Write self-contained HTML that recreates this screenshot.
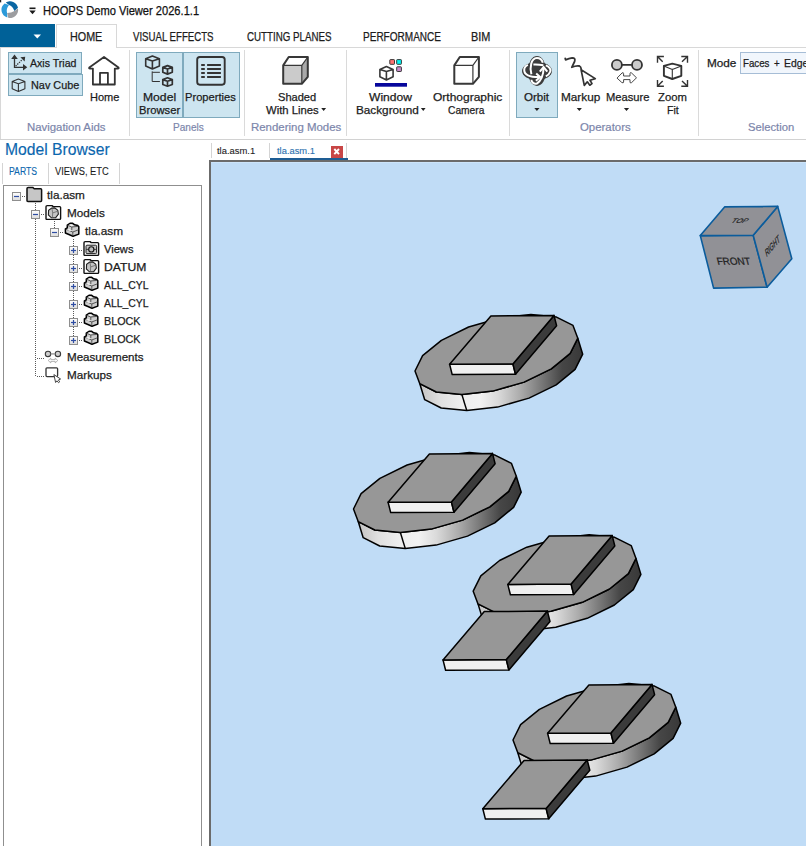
<!DOCTYPE html>
<html><head><meta charset="utf-8">
<style>
*{margin:0;padding:0;box-sizing:border-box}
html,body{width:806px;height:846px;overflow:hidden;background:#fff;font-family:"Liberation Sans",sans-serif;color:#1a1a1a}
.a{position:absolute}
.f{position:absolute;white-space:nowrap;font-size:11.5px;line-height:12px;color:#1c1c1c;transform-origin:0 0;-webkit-text-stroke:0.25px currentColor}
.big{font-size:12px}
.g{color:#7c86ab;font-size:11px;-webkit-text-stroke:0.2px currentColor}
.sep{position:absolute;width:1px;background:#dadada;top:50px;height:86px}
.hl{position:absolute;background:#cde5f0;border:1px solid #7faabd}
svg{overflow:visible}
</style></head><body>

<!-- ===== title bar ===== -->
<svg class="a" style="left:0;top:0" width="24" height="22">
  <path d="M0 0 L1.2 0 L1.2 2.6 L0 2.2 Z" fill="#222"></path>
  <path d="M4.6 3.4 A8 8 0 0 0 7.4 17.5 L7.1 13.1 Q5.8 8.6 9 4.9 Z" fill="#2b9ad9"></path>
  <path d="M5.8 2.6 A8 8 0 0 1 18.0 7.7 L14.4 10.9 Q12.6 5.9 9 4.9 Z" fill="#0a66a3"></path>
  <path d="M18.0 8.6 A8 8 0 0 1 8.2 17.8 L7.1 13.1 Q11.5 12.6 14.4 10.9 Z" fill="#9c9da0"></path>
</svg>
<svg class="a" style="left:0;top:0" width="45" height="22">
  <rect x="29.5" y="7.5" width="6" height="1.6" fill="#1a1a1a"></rect>
  <path d="M29.3 10.6 L35.7 10.6 L32.5 14.2 Z" fill="#1a1a1a"></path>
</svg>
<div class="f big" style="--x0: 43; --x1: 199.4; --by: 14.9; color: rgb(17, 17, 17); left: 43px; top: 4.9px; transform: scaleX(0.9262);">HOOPS Demo Viewer 2026.1.1</div>

<!-- ===== tabs row ===== -->
<div class="a" style="left:0;top:24px;width:55px;height:23px;background:#006198"></div>
<svg class="a" style="left:0;top:0" width="60" height="50"><path d="M33.5 34.5 L41 34.5 L37.25 38.5 Z" fill="#fff"></path></svg>
<div class="a" style="left:0;top:47px;width:806px;height:1px;background:#d8d8d8"></div>
<div class="a" style="left:56px;top:24px;width:61px;height:24px;background:#fff;border:1px solid #d8d8d8;border-bottom:none"></div>
<div class="f big" style="--x0: 70.3; --x1: 102.6; --by: 41; left: 70.3px; top: 31px; transform: scaleX(0.8973);">HOME</div>
<div class="f big" style="--x0: 132.9; --x1: 213.8; --by: 41; left: 132.9px; top: 31px; transform: scaleX(0.8035);">VISUAL EFFECTS</div>
<div class="f big" style="--x0: 246.5; --x1: 331; --by: 41; left: 246.5px; top: 31px; transform: scaleX(0.8124);">CUTTING PLANES</div>
<div class="f big" style="--x0: 362.6; --x1: 440.6; --by: 41; left: 362.6px; top: 31px; transform: scaleX(0.8357);">PERFORMANCE</div>
<div class="f big" style="--x0: 470.6; --x1: 490; --by: 41; left: 470.6px; top: 31px; transform: scaleX(0.9092);">BIM</div>

<!-- ===== ribbon body ===== -->
<div class="a" style="left:0;top:139px;width:806px;height:1px;background:#d2d2d2"></div>
<div class="a" style="left:0;top:47px;width:1px;height:92px;background:#d8d8d8"></div>
<div class="sep" style="left:129px"></div>
<div class="sep" style="left:244px"></div>
<div class="sep" style="left:346px"></div>
<div class="sep" style="left:509px"></div>
<div class="sep" style="left:698px"></div>

<!-- nav aids -->
<div class="hl" style="left:8px;top:52px;width:74px;height:22px"></div>
<div class="hl" style="left:8px;top:74px;width:75px;height:22px"></div>
<svg class="a" style="left:0;top:0" width="130" height="100" fill="none" stroke="#333" stroke-width="1.3">
  <path d="M14.5 58 L14.5 67.3 L23.5 67.3"></path>
  <path d="M14.5 54.6 L11.2 59 L17.8 59 Z M27.3 67.3 L23 64 L23 70.6 Z M25.2 56.7 L20.4 57.3 L24.6 61.6 Z" fill="#333" stroke="none"></path>
  <path d="M15.6 66.2 L22.4 59.4" stroke-width="1.2" stroke-dasharray="1.4 1"></path>
  <path d="M12.2 81.4 L18.4 79 L24.9 81.4 L24.9 88.7 L18.4 91.5 L12.2 88.7 Z M12.2 81.4 L18.4 83.7 L24.9 81.4 M18.4 83.7 L18.4 91.5" stroke-width="1.1" stroke-linejoin="round"></path>
  <path d="M104 57 L89.3 67.5 Q88.6 68.6 90 68.6 L92.9 68.6 L92.9 84.5 L114.8 84.5 L114.8 68.6 L117.8 68.6 Q119.2 68.6 118.5 67.5 Z M100 84.5 L100 72.8 L107.9 72.8 L107.9 84.5" stroke-width="1.8" stroke-linejoin="round"></path>
</svg>
<div class="f" style="--x0: 29.8; --x1: 76.1; --by: 67; left: 29.8px; top: 57px; transform: scaleX(0.9205);">Axis Triad</div>
<div class="f" style="--x0: 30.6; --x1: 78.5; --by: 88.6; left: 30.6px; top: 78.6px; transform: scaleX(0.944);">Nav Cube</div>
<div class="f" style="--x0: 89.5; --x1: 118.5; --by: 101.2; left: 89.5px; top: 91.2px; transform: scaleX(0.9577);">Home</div>
<div class="f g" style="--x0: 26.8; --x1: 106.4; --by: 130.5; left: 26.8px; top: 120.5px; transform: scaleX(1.0347);">Navigation Aids</div>

<!-- panels -->
<div class="hl" style="left:136px;top:52px;width:47px;height:66px"></div>
<div class="hl" style="left:183px;top:52px;width:57px;height:66px"></div>
<svg class="a" style="left:0;top:0" width="250" height="100" fill="none" stroke="#333" stroke-linejoin="round">
  <path d="M152.4 56 L145.7 58.7 L145.7 66.1 L152.4 68.9 L159.4 66.1 L159.4 58.7 Z M145.7 58.7 L152.4 60.9 L159.4 58.7 M152.4 60.9 L152.4 68.9" stroke-width="1.6"></path>
  <path d="M167.5 65.6 L162.8 67.4 L162.8 72.3 L167.5 74.1 L172.3 72.3 L172.3 67.4 Z M162.8 67.4 L167.5 69 L172.3 67.4 M167.5 69 L167.5 74.1" stroke-width="1.7"></path>
  <path d="M167.5 77.8 L162.8 79.6 L162.8 84.5 L167.5 86.2 L172.3 84.5 L172.3 79.6 Z M162.8 79.6 L167.5 81.2 L172.3 79.6 M167.5 81.2 L167.5 86.2" stroke-width="1.7"></path>
  <path d="M152.2 71.4 L152.2 81.5 L159.9 81.5 M152.2 72.3 L159.9 72.3" stroke-width="1"></path>
  <rect x="197.2" y="57" width="27.5" height="27.7" rx="2.6" stroke-width="1.9"></rect>
  <path d="M201.2 65 H204.8 M207.1 65 H220.9 M201.2 69 H204.8 M207.1 69 H220.9 M201.2 73 H204.8 M207.1 73 H220.9 M201.2 77 H204.8 M207.1 77 H220.9" stroke-width="1.8"></path>
</svg>
<div class="f" style="--x0: 143.4; --x1: 175.9; --by: 101.1; left: 143.4px; top: 91.1px; transform: scaleX(1.0563);">Model</div>
<div class="f" style="--x0: 138.6; --x1: 179.9; --by: 113.6; left: 138.6px; top: 103.6px; transform: scaleX(0.9753);">Browser</div>
<div class="f" style="--x0: 185.4; --x1: 236.4; --by: 101.1; left: 185.4px; top: 91.1px; transform: scaleX(0.9684);">Properties</div>
<div class="f g" style="--x0: 172.9; --x1: 204.1; --by: 130.5; left: 172.9px; top: 120.5px; transform: scaleX(0.9141);">Panels</div>

<!-- rendering modes / window bg / camera -->
<svg class="a" style="left:0;top:0" width="520" height="100" stroke="#383838" stroke-linejoin="round">
  <path d="M283.2 65.4 L301.8 65.4 L307.8 57 L288.7 57 Z" fill="#fff" stroke="none"></path>
  <path d="M283.2 65.4 L301.8 65.4 L301.8 83.8 L283.2 83.8 Z" fill="#cbcbcb" stroke="none"></path>
  <path d="M301.8 65.4 L307.8 57 L307.8 76.8 L301.8 83.8 Z" fill="#a9a9a9" stroke="none"></path>
  <path d="M283.2 65.4 L288.7 57 L307.8 57 L307.8 76.8 L301.8 83.8 L283.2 83.8 Z" fill="none" stroke-width="2"></path>
  <path d="M283.2 65.4 L301.8 65.4 L307.8 57 M301.8 65.4 L301.8 83.8" fill="none" stroke-width="1.2"></path>
  <path d="M454.3 65.4 L459.8 57 L478.9 57 L478.9 76.8 L472.9 83.8 L454.3 83.8 Z" fill="none" stroke-width="2"></path>
  <path d="M454.3 65.4 L472.9 65.4 L478.9 57 M472.9 65.4 L472.9 83.8" fill="none" stroke-width="1.2"></path>
  <rect x="375" y="83" width="32" height="3.7" fill="#07079c" stroke="none"></rect>
  <path d="M386.4 66.6 L379.9 69.4 L379.9 76.8 L386.4 80 L393.1 76.8 L393.1 69.4 Z M379.9 69.4 L386.4 71.6 L393.1 69.4 M386.4 71.6 L386.4 80" fill="none" stroke-width="1.6"></path>
  <rect x="389.8" y="59.6" width="4.7" height="4.7" rx="0.6" fill="#ff7272" stroke-width="1"></rect>
  <rect x="396.7" y="59.6" width="4.7" height="4.7" rx="0.6" fill="#00f6f6" stroke-width="1"></rect>
  <rect x="396.7" y="66.8" width="4.7" height="4.7" rx="0.6" fill="#c98ccc" stroke-width="1"></rect>
  <path d="M321.2 108 L326.1 108 L323.65 111 Z M420.9 108 L425.6 108 L423.25 111 Z" fill="#222" stroke="none"></path>
</svg>
<div class="f" style="--x0: 277.5; --x1: 315.3; --by: 101.1; left: 277.5px; top: 91.1px; transform: scaleX(0.963);">Shaded</div>
<div class="f" style="--x0: 265.5; --x1: 318.4; --by: 113.6; left: 265.5px; top: 103.6px; transform: scaleX(0.9808);">With Lines</div>
<div class="f g" style="--x0: 250.7; --x1: 341.5; --by: 130.5; left: 250.7px; top: 120.5px; transform: scaleX(1.0397);">Rendering Modes</div>
<div class="f" style="--x0: 369.3; --x1: 412.9; --by: 101.1; left: 369.3px; top: 91.1px; transform: scaleX(1.0482);">Window</div>
<div class="f" style="--x0: 355.5; --x1: 417.8; --by: 113.6; left: 355.5px; top: 103.6px; transform: scaleX(1.0217);">Background</div>
<div class="f" style="--x0: 432.5; --x1: 502.1; --by: 101.1; left: 432.5px; top: 91.1px; transform: scaleX(1.043);">Orthographic</div>
<div class="f" style="--x0: 448.4; --x1: 485.3; --by: 113.6; left: 448.4px; top: 103.6px; transform: scaleX(0.889);">Camera</div>

<!-- operators -->
<div class="hl" style="left:516px;top:52px;width:42px;height:66px"></div>
<svg class="a" style="left:0;top:0" width="700" height="120" fill="none" stroke="#333" stroke-linejoin="round" stroke-linecap="round">
  <ellipse cx="537" cy="71" rx="15" ry="9.2" fill="#3c3c3c" stroke="none"></ellipse>
  <ellipse cx="537" cy="71" rx="9.2" ry="15" fill="#3c3c3c" stroke="none"></ellipse>
  <g stroke="#fff" stroke-width="2" stroke-linecap="butt">
  <path d="M531.4 74.3 C529.5 68 531 58 536.9 58 C540 58 542 60 542.8 62.7"></path>
  <path d="M533.4 64.6 Q538 64.3 543.3 65.3"></path>
  <path d="M527.9 64.9 C523 67 523 73 527.9 75.3 C531 76.8 536 77.2 540 77.1"></path>
  <path d="M536.2 73.6 L540.1 77.1 L535.9 80.8" stroke-linejoin="miter"></path>
  <path d="M545.8 65.4 C549.5 66.5 551 69.5 550.3 71.5 C549.5 74 547.5 75.5 545.8 76.3"></path>
  <path d="M543.6 67.5 C543.5 73 542 80 536.9 83.6 C534 84.6 531.5 82 531.4 79.8"></path>
  <path d="M539.8 71.6 L543.6 67 L547.3 71.6" stroke-linejoin="miter"></path>
  </g>
  <path d="M534.3 108 L539.5 108 L536.9 111 Z M576.7 108 L581.9 108 L579.3 111 Z M623.9 108 L629.1 108 L626.5 111 Z" fill="#222" stroke="none"></path>
  <path d="M565.2 58.3 L565.6 59.8 Q569 58.4 572.2 57.9 Q575.8 58 574.6 61.5 L571.8 67.3 Q576 65.4 579.4 66 Q581 66.8 581.2 69" stroke-width="1.8"></path>
  <path d="M581.1 69.8 L584.3 85.4 L587.3 81.8 L589.8 85.2 L592 83.6 L590 80.3 L595.3 78.6 Z" fill="#fff" stroke-width="1.7"></path>
  <circle cx="616.9" cy="64.9" r="5" fill="#cbcbcb" stroke-width="1.8"></circle>
  <circle cx="637" cy="64.9" r="5" fill="#cbcbcb" stroke-width="1.8"></circle>
  <path d="M621.9 64.9 L632 64.9" stroke-width="1.6"></path>
  <path d="M617.3 77.8 L622 73 Q623.5 72 623.6 73.6 L623.6 76 L630 76 L630 73.6 Q630.1 72 631.6 73 L636.5 77.8 L631.6 82.6 Q630.1 83.6 630 82 L630 79.6 L623.6 79.6 L623.6 82 Q623.5 83.6 622 82.6 Z" stroke-width="0.9"></path>
  <path d="M657.5 62.7 L657.5 56.5 L663.9 56.5 M657.5 56.5 L662.7 61.7 M687.5 62.7 L687.5 56.5 L681.3 56.5 M687.5 56.5 L682 61.7 M657.5 80 L657.5 86.2 L663.9 86.2 M657.5 86.2 L662.7 81 M687.5 80 L687.5 86.2 L681.3 86.2 M687.5 86.2 L682 81" stroke-width="1.4" stroke-linecap="butt" stroke-linejoin="miter"></path>
  <path d="M672.3 63.7 L663.9 65.9 L663.9 75.8 L672.3 79 L681.3 75.8 L681.3 65.9 Z" stroke-width="1.9"></path>
  <path d="M663.9 65.9 L672.3 69.4 L681.3 65.9 M672.3 69.4 L672.3 79" stroke-width="1.1"></path>
</svg>
<div class="f" style="--x0: 523.7; --x1: 549.6; --by: 101.1; left: 523.7px; top: 91.1px; transform: scaleX(1.0068);">Orbit</div>
<div class="f" style="--x0: 560.7; --x1: 599.6; --by: 101.1; left: 560.7px; top: 91.1px; transform: scaleX(1.025);">Markup</div>
<div class="f" style="--x0: 605.5; --x1: 648.6; --by: 101.1; left: 605.5px; top: 91.1px; transform: scaleX(0.9719);">Measure</div>
<div class="f" style="--x0: 658; --x1: 686.3; --by: 101.1; left: 658px; top: 91.1px; transform: scaleX(0.9821);">Zoom</div>
<div class="f" style="--x0: 666.8; --x1: 679.3; --by: 113.6; left: 666.8px; top: 103.6px; transform: scaleX(0.9205);">Fit</div>
<div class="f g" style="--x0: 579.5; --x1: 630.7; --by: 130.5; left: 579.5px; top: 120.5px; transform: scaleX(1.0362);">Operators</div>

<!-- selection -->
<div class="f" style="--x0: 707.3; --x1: 736.3; --by: 66.9; left: 707.3px; top: 56.9px; transform: scaleX(1.0222);">Mode</div>
<div class="a" style="left:740px;top:52px;width:90px;height:22px;background:#f1f6fc;border:1px solid #a6bdd6"></div>
<div class="f" style="--x0: 742.5; --x1: 769.2; --by: 66.9; left: 742.5px; top: 56.9px; transform: scaleX(0.8458);">Faces</div>
<div class="f" style="--x0: 774.2; --s: 0.85; --by: 66.9; left: 774.2px; top: 56.9px; transform: scaleX(0.85);">+</div>
<div class="f" style="--x0: 784.3; --s: 0.9; --by: 66.9; left: 784.3px; top: 56.9px; transform: scaleX(0.9);">Edges</div>
<div class="f g" style="--x0: 747.6; --x1: 793.6; --by: 130.5; left: 747.6px; top: 120.5px; transform: scaleX(1.0192);">Selection</div>

<!-- tree -->
<svg class="a" style="left:0;top:0" width="210" height="400"><defs><linearGradient id="eg" x1="0" y1="0" x2="0" y2="1"><stop offset="0" stop-color="#fff"></stop><stop offset="1" stop-color="#dcdcdc"></stop></linearGradient></defs><path d="M35.5 203 V376.5 M54.5 221 V232.5 M73.5 239 V341" stroke="#5a5a5a" stroke-width="1" stroke-dasharray="1 1"></path><rect x="12.5" y="192.5" width="8" height="8" fill="url(#eg)" stroke="#8e8e8e" stroke-width="1"></rect><path d="M14.0 196.5 H19.0" stroke="#2f4ea3" stroke-width="1.2"></path><path d="M22.0 196.5 H25.0" stroke="#5a5a5a" stroke-width="1" stroke-dasharray="1 1"></path><g transform="translate(26.2,196.4)"><path d="M0.8 -7.8 Q0.8 -9 2 -9 L6.5 -9 L8 -7.6 L14.5 -7.6 Q15.4 -7.6 15.4 -6.6 L15.4 4.2 Q15.4 5 14.5 5 L1.8 5 Q0.8 5 0.8 4 Z" fill="#c6c6c6" stroke="#111" stroke-width="1.5" stroke-linejoin="round"></path></g><rect x="31.5" y="210.5" width="8" height="8" fill="url(#eg)" stroke="#8e8e8e" stroke-width="1"></rect><path d="M33.0 214.5 H38.0" stroke="#2f4ea3" stroke-width="1.2"></path><path d="M41.0 214.5 H44.0" stroke="#5a5a5a" stroke-width="1" stroke-dasharray="1 1"></path><g transform="translate(45.2,214.4)"><path d="M0.8 -7.6 Q0.8 -8.8 2 -8.8 L6.8 -8.8 L8 -7.8 L14.5 -7.8 Q15.4 -7.8 15.4 -6.8 L15.4 4.2 Q15.4 5 14.5 5 L1.8 5 Q0.8 5 0.8 4 Z" fill="#fff" stroke="#111" stroke-width="1.4" stroke-linejoin="round"></path><path d="M6.5 -6.3 L9.5 -6.5 L12.6 -4.2 L13.2 -0.2 L10.5 3.2 L6.2 3.4 L3.2 0.6 L3.4 -4 Z" fill="#c4c4c4" stroke="#222" stroke-width="1.1"></path><path d="M6.8 -5.5 L7.5 -1.5 L12 -3 M7.5 -1.5 L7.2 3" stroke="#666" stroke-width="0.8" fill="none"></path></g><rect x="50.5" y="228.5" width="8" height="8" fill="url(#eg)" stroke="#8e8e8e" stroke-width="1"></rect><path d="M52.0 232.5 H57.0" stroke="#2f4ea3" stroke-width="1.2"></path><path d="M60.0 232.5 H63.0" stroke="#5a5a5a" stroke-width="1" stroke-dasharray="1 1"></path><g transform="translate(64.2,232.4)"><path d="M5.8 -9.1 L8.5 -9.1 L10.5 -7.6 L13.7 -6.8 L14.6 -5.7 L14.6 1.7 L8.8 3.9 L1.2 0.6 L1.2 -3.5 L3.1 -4.6 L3.1 -7.3 Z" fill="#cdcdcd" stroke="#000" stroke-width="1.5" stroke-linejoin="round"></path><path d="M3.4 -7 L7.6 -5.4 L7.6 -2.4 M7.6 -5.4 L13.8 -6 M1.6 -3.3 L8.6 -0.4 L14.2 -2.6 M8.6 -0.4 L8.6 3.4" stroke="#4a4a4a" stroke-width="0.9" fill="none"></path><path d="M4.5 -7.8 L7 -8 L9.5 -6.8 L7.3 -6.2 Z M2.5 -2.8 L5 -3.5 L7.5 -1.8 L5.5 -1.2 Z" fill="#fff" stroke="none" opacity="0.8"></path></g><rect x="69.5" y="246.5" width="8" height="8" fill="url(#eg)" stroke="#8e8e8e" stroke-width="1"></rect><path d="M71.0 250.5 H76.0" stroke="#2f4ea3" stroke-width="1.2"></path><path d="M73.5 248.0 V253.0" stroke="#2f4ea3" stroke-width="1.2"></path><path d="M79.0 250.5 H82.0" stroke="#5a5a5a" stroke-width="1" stroke-dasharray="1 1"></path><g transform="translate(83.2,250.4)"><path d="M0.8 -7.6 Q0.8 -8.8 2 -8.8 L6.8 -8.8 L8 -7.8 L14.5 -7.8 Q15.4 -7.8 15.4 -6.8 L15.4 4.2 Q15.4 5 14.5 5 L1.8 5 Q0.8 5 0.8 4 Z" fill="#fff" stroke="#111" stroke-width="1.4" stroke-linejoin="round"></path><rect x="2.8" y="-5.2" width="10.6" height="8.4" rx="1" fill="#c4c4c4" stroke="#222" stroke-width="1"></rect><path d="M2.8 -1 H13.4" stroke="#333" stroke-width="0.9"></path><circle cx="8.1" cy="-1" r="2.6" fill="#bdbdbd" stroke="#111" stroke-width="1.1"></circle></g><rect x="69.5" y="264.5" width="8" height="8" fill="url(#eg)" stroke="#8e8e8e" stroke-width="1"></rect><path d="M71.0 268.5 H76.0" stroke="#2f4ea3" stroke-width="1.2"></path><path d="M73.5 266.0 V271.0" stroke="#2f4ea3" stroke-width="1.2"></path><path d="M79.0 268.5 H82.0" stroke="#5a5a5a" stroke-width="1" stroke-dasharray="1 1"></path><g transform="translate(83.2,268.4)"><path d="M0.8 -7.6 Q0.8 -8.8 2 -8.8 L6.8 -8.8 L8 -7.8 L14.5 -7.8 Q15.4 -7.8 15.4 -6.8 L15.4 4.2 Q15.4 5 14.5 5 L1.8 5 Q0.8 5 0.8 4 Z" fill="#fff" stroke="#111" stroke-width="1.4" stroke-linejoin="round"></path><path d="M6.5 -6.3 L9.5 -6.5 L12.6 -4.2 L13.2 -0.2 L10.5 3.2 L6.2 3.4 L3.2 0.6 L3.4 -4 Z" fill="#c4c4c4" stroke="#222" stroke-width="1.1"></path><path d="M6.8 -5.5 L7.5 -1.5 L12 -3 M7.5 -1.5 L7.2 3" stroke="#666" stroke-width="0.8" fill="none"></path></g><rect x="69.5" y="282.5" width="8" height="8" fill="url(#eg)" stroke="#8e8e8e" stroke-width="1"></rect><path d="M71.0 286.5 H76.0" stroke="#2f4ea3" stroke-width="1.2"></path><path d="M73.5 284.0 V289.0" stroke="#2f4ea3" stroke-width="1.2"></path><path d="M79.0 286.5 H82.0" stroke="#5a5a5a" stroke-width="1" stroke-dasharray="1 1"></path><g transform="translate(83.2,286.4)"><path d="M5.8 -9.1 L8.5 -9.1 L10.5 -7.6 L13.7 -6.8 L14.6 -5.7 L14.6 1.7 L8.8 3.9 L1.2 0.6 L1.2 -3.5 L3.1 -4.6 L3.1 -7.3 Z" fill="#cdcdcd" stroke="#000" stroke-width="1.5" stroke-linejoin="round"></path><path d="M3.4 -7 L7.6 -5.4 L7.6 -2.4 M7.6 -5.4 L13.8 -6 M1.6 -3.3 L8.6 -0.4 L14.2 -2.6 M8.6 -0.4 L8.6 3.4" stroke="#4a4a4a" stroke-width="0.9" fill="none"></path><path d="M4.5 -7.8 L7 -8 L9.5 -6.8 L7.3 -6.2 Z M2.5 -2.8 L5 -3.5 L7.5 -1.8 L5.5 -1.2 Z" fill="#fff" stroke="none" opacity="0.8"></path></g><rect x="69.5" y="300.5" width="8" height="8" fill="url(#eg)" stroke="#8e8e8e" stroke-width="1"></rect><path d="M71.0 304.5 H76.0" stroke="#2f4ea3" stroke-width="1.2"></path><path d="M73.5 302.0 V307.0" stroke="#2f4ea3" stroke-width="1.2"></path><path d="M79.0 304.5 H82.0" stroke="#5a5a5a" stroke-width="1" stroke-dasharray="1 1"></path><g transform="translate(83.2,304.4)"><path d="M5.8 -9.1 L8.5 -9.1 L10.5 -7.6 L13.7 -6.8 L14.6 -5.7 L14.6 1.7 L8.8 3.9 L1.2 0.6 L1.2 -3.5 L3.1 -4.6 L3.1 -7.3 Z" fill="#cdcdcd" stroke="#000" stroke-width="1.5" stroke-linejoin="round"></path><path d="M3.4 -7 L7.6 -5.4 L7.6 -2.4 M7.6 -5.4 L13.8 -6 M1.6 -3.3 L8.6 -0.4 L14.2 -2.6 M8.6 -0.4 L8.6 3.4" stroke="#4a4a4a" stroke-width="0.9" fill="none"></path><path d="M4.5 -7.8 L7 -8 L9.5 -6.8 L7.3 -6.2 Z M2.5 -2.8 L5 -3.5 L7.5 -1.8 L5.5 -1.2 Z" fill="#fff" stroke="none" opacity="0.8"></path></g><rect x="69.5" y="318.5" width="8" height="8" fill="url(#eg)" stroke="#8e8e8e" stroke-width="1"></rect><path d="M71.0 322.5 H76.0" stroke="#2f4ea3" stroke-width="1.2"></path><path d="M73.5 320.0 V325.0" stroke="#2f4ea3" stroke-width="1.2"></path><path d="M79.0 322.5 H82.0" stroke="#5a5a5a" stroke-width="1" stroke-dasharray="1 1"></path><g transform="translate(83.2,322.4)"><path d="M5.8 -9.1 L8.5 -9.1 L10.5 -7.6 L13.7 -6.8 L14.6 -5.7 L14.6 1.7 L8.8 3.9 L1.2 0.6 L1.2 -3.5 L3.1 -4.6 L3.1 -7.3 Z" fill="#cdcdcd" stroke="#000" stroke-width="1.5" stroke-linejoin="round"></path><path d="M3.4 -7 L7.6 -5.4 L7.6 -2.4 M7.6 -5.4 L13.8 -6 M1.6 -3.3 L8.6 -0.4 L14.2 -2.6 M8.6 -0.4 L8.6 3.4" stroke="#4a4a4a" stroke-width="0.9" fill="none"></path><path d="M4.5 -7.8 L7 -8 L9.5 -6.8 L7.3 -6.2 Z M2.5 -2.8 L5 -3.5 L7.5 -1.8 L5.5 -1.2 Z" fill="#fff" stroke="none" opacity="0.8"></path></g><rect x="69.5" y="336.5" width="8" height="8" fill="url(#eg)" stroke="#8e8e8e" stroke-width="1"></rect><path d="M71.0 340.5 H76.0" stroke="#2f4ea3" stroke-width="1.2"></path><path d="M73.5 338.0 V343.0" stroke="#2f4ea3" stroke-width="1.2"></path><path d="M79.0 340.5 H82.0" stroke="#5a5a5a" stroke-width="1" stroke-dasharray="1 1"></path><g transform="translate(83.2,340.4)"><path d="M5.8 -9.1 L8.5 -9.1 L10.5 -7.6 L13.7 -6.8 L14.6 -5.7 L14.6 1.7 L8.8 3.9 L1.2 0.6 L1.2 -3.5 L3.1 -4.6 L3.1 -7.3 Z" fill="#cdcdcd" stroke="#000" stroke-width="1.5" stroke-linejoin="round"></path><path d="M3.4 -7 L7.6 -5.4 L7.6 -2.4 M7.6 -5.4 L13.8 -6 M1.6 -3.3 L8.6 -0.4 L14.2 -2.6 M8.6 -0.4 L8.6 3.4" stroke="#4a4a4a" stroke-width="0.9" fill="none"></path><path d="M4.5 -7.8 L7 -8 L9.5 -6.8 L7.3 -6.2 Z M2.5 -2.8 L5 -3.5 L7.5 -1.8 L5.5 -1.2 Z" fill="#fff" stroke="none" opacity="0.8"></path></g><path d="M37 358.5 H44" stroke="#5a5a5a" stroke-width="1" stroke-dasharray="1 1"></path><g transform="translate(45.2,358.4)"><circle cx="2.8" cy="-4.5" r="2.7" fill="#cfcfcf" stroke="#3a3a3a" stroke-width="1.1"></circle><circle cx="12.7" cy="-4.5" r="2.7" fill="#cfcfcf" stroke="#3a3a3a" stroke-width="1.1"></circle><path d="M5.5 -4.5 H10" stroke="#999" stroke-width="1.4"></path><path d="M3 2.1 L5.6 -0.3 L5.6 1.2 L10 1.2 L10 -0.3 L12.6 2.1 L10 4.5 L10 3 L5.6 3 L5.6 4.5 Z" fill="none" stroke="#a0a0a0" stroke-width="0.8"></path></g><path d="M37 376.5 H44" stroke="#5a5a5a" stroke-width="1" stroke-dasharray="1 1"></path><g transform="translate(45.2,376.4)"><rect x="0.8" y="-8.6" width="11.6" height="8.8" rx="1" fill="#fff" stroke="#333" stroke-width="1.3"></rect><path d="M8.7 -1.8 L10.4 6.1 L11.8 4.4 L13.3 6.3 L14.5 5.4 L13.2 3.6 L15.4 2.6 Z" fill="#fff" stroke="#444" stroke-width="1"></path></g></svg>
<div class="f" style="--x0: 47; --x1: 84.3; --by: 198.9; left: 47px; top: 188.9px; transform: scaleX(1.0223);">tla.asm</div>
<div class="f" style="--x0: 66.5; --x1: 104.6; --by: 216.9; left: 66.5px; top: 206.9px; transform: scaleX(1.0209);">Models</div>
<div class="f" style="--x0: 84.9; --x1: 122.4; --by: 234.9; left: 84.9px; top: 224.9px; transform: scaleX(1.0278);">tla.asm</div>
<div class="f" style="--x0: 104.2; --x1: 133.9; --by: 252.9; left: 104.2px; top: 242.9px; transform: scaleX(0.9669);">Views</div>
<div class="f" style="--x0: 104.2; --x1: 145.9; --by: 270.9; left: 104.2px; top: 260.9px; transform: scaleX(1.057);">DATUM</div>
<div class="f" style="--x0: 104.2; --x1: 149.3; --by: 288.9; left: 104.2px; top: 278.9px; transform: scaleX(0.905);">ALL_CYL</div>
<div class="f" style="--x0: 104.2; --x1: 149.3; --by: 306.9; left: 104.2px; top: 296.9px; transform: scaleX(0.905);">ALL_CYL</div>
<div class="f" style="--x0: 104.2; --x1: 141; --by: 324.9; left: 104.2px; top: 314.9px; transform: scaleX(0.936);">BLOCK</div>
<div class="f" style="--x0: 104.2; --x1: 141; --by: 342.9; left: 104.2px; top: 332.9px; transform: scaleX(0.936);">BLOCK</div>
<div class="f" style="--x0: 66.5; --x1: 143.3; --by: 360.9; left: 66.5px; top: 350.9px; transform: scaleX(1.0064);">Measurements</div>
<div class="f" style="--x0: 66.5; --x1: 111.6; --by: 378.9; left: 66.5px; top: 368.9px; transform: scaleX(1.017);">Markups</div>

<!-- ===== model browser ===== -->
<div class="f" style="--x0: 5.7; --x1: 110; --by: 154.8; font-size: 16px; line-height: 16px; color: rgb(11, 102, 174); -webkit-text-stroke: 0.15px currentcolor; left: 4.72px; top: 141.8px; transform: scaleX(0.9805);">Model Browser</div>
<div class="a" style="left:2px;top:163px;width:1px;height:21px;background:#d4d4d4"></div>
<div class="a" style="left:48px;top:163px;width:1px;height:21px;background:#d4d4d4"></div>
<div class="a" style="left:119px;top:163px;width:1px;height:21px;background:#d4d4d4"></div>
<div class="f" style="--x0: 8.5; --x1: 36.8; --by: 174.9; font-size: 10px; line-height: 10px; color: rgb(11, 102, 174); -webkit-text-stroke: 0.1px currentcolor; left: 8.5px; top: 166.9px; transform: scaleX(0.8642);">PARTS</div>
<div class="f" style="--x0: 55; --x1: 108.5; --by: 174.9; font-size: 10px; line-height: 10px; color: rgb(28, 28, 28); -webkit-text-stroke: 0.1px currentcolor; left: 55px; top: 166.9px; transform: scaleX(0.9294);">VIEWS, ETC</div>
<div class="a" style="left:3px;top:185px;width:199px;height:670px;border:1px solid #8f8f8f;border-bottom:none"></div>

<!-- ===== doc tabs ===== -->
<div class="a" style="left:211px;top:143px;width:1px;height:15px;background:#d4d4d4"></div>
<div class="a" style="left:269px;top:143px;width:1px;height:15px;background:#d4d4d4"></div>
<div class="a" style="left:346px;top:143px;width:1px;height:15px;background:#d4d4d4"></div>
<div class="f" style="--x0: 217.1; --x1: 255; --by: 153.8; font-size: 9.5px; line-height: 10px; color: rgb(28, 28, 28); -webkit-text-stroke: 0.1px currentcolor; left: 217.1px; top: 145.8px; transform: scaleX(0.9906);">tla.asm.1</div>
<div class="f" style="--x0: 276.7; --x1: 314.4; --by: 153.8; font-size: 9.5px; line-height: 10px; color: rgb(42, 111, 174); -webkit-text-stroke: 0.1px currentcolor; left: 276.7px; top: 145.8px; transform: scaleX(0.9854);">tla.asm.1</div>
<div class="a" style="left:331px;top:146px;width:12px;height:12px;background:#c84646"></div>
<svg class="a" style="left:0;top:0" width="350" height="170"><path d="M334.3 149 L339 154.2 M339 149 L334.3 154.2" stroke="#fff" stroke-width="1.9"></path></svg>
<div class="a" style="left:270px;top:158px;width:78px;height:2px;background:#1e5d94"></div>

<!-- ===== viewport ===== -->
<div class="a" style="left:209px;top:160px;width:597px;height:686px;background:#c0dcf6;border-left:2px solid #6b6b6b;border-top:2px solid #6b6b6b"></div>
<div class="a" style="left:211px;top:162px;width:595px;height:1px;background:#cce4fa"></div>

<!-- nav cube -->
<svg class="a" style="left:0;top:0" width="806" height="300">
  <g fill="#919196" stroke="#0b5c9c" stroke-width="1.6" stroke-linejoin="round">
    <path d="M700.3 235.6 L753.2 235.3 L767.1 287.2 L713.6 288.1 Z"></path>
    <path d="M753.2 235.3 L777.7 206.4 L791.8 258.8 L767.1 287.2 Z"></path>
    <path d="M724.6 206.9 L777.7 206.4 L753.2 235.3 L700.3 235.6 Z"></path>
  </g>
  <g font-family="Liberation Sans" font-size="10" fill="#1e1e1e" stroke="#1e1e1e" stroke-width="0.25" text-anchor="middle">
  <text x="0" y="3.65" transform="matrix(0.977,-0.006,0.26,1.03,733.5,261)">FRONT</text>
  <text x="0" y="3.65" transform="matrix(0.778,-0.007,-0.546,0.645,740.2,220.65)">TOP</text>
  <text x="0" y="3.65" transform="matrix(0.443,-0.523,0.262,0.976,772.35,245.6)">RIGHT</text>
  </g>
</svg>

<!-- shapes -->
<svg class="a" style="left:0;top:0" width="806" height="846" viewBox="0 0 806 846"><defs><linearGradient id="cg" gradientUnits="userSpaceOnUse" x1="419" y1="0" x2="583" y2="0"><stop offset="0.000" stop-color="#c2c2c2"></stop><stop offset="0.128" stop-color="#e0e0e0"></stop><stop offset="0.262" stop-color="#eeeeee"></stop><stop offset="0.372" stop-color="#f2f2f2"></stop><stop offset="0.482" stop-color="#dadada"></stop><stop offset="0.616" stop-color="#acacac"></stop><stop offset="0.768" stop-color="#707070"></stop><stop offset="0.872" stop-color="#464646"></stop><stop offset="1.000" stop-color="#383838"></stop></linearGradient><g id="gA"><polygon points="577.8,338.2 570.2,353.4 551.3,368.8 524.1,382.1 492.7,391.1 461.9,394.6 436.3,392.0 419.8,383.7 424.7,399.7 441.2,408.0 466.8,410.6 497.6,407.1 529.0,398.1 556.2,384.8 575.1,369.4 582.7,354.2" fill="url(#cg)"></polygon><polygon points="415.0,371.0 422.6,355.7 441.4,340.3 468.6,327.0 500.1,318.0 530.9,314.5 556.5,317.1 573.0,325.4 577.8,338.2 570.2,353.4 551.3,368.8 524.1,382.1 492.7,391.1 461.9,394.6 436.3,392.0 419.8,383.7" fill="#979797"></polygon><line x1="461.9" y1="394.6" x2="466.8" y2="410.6"></line><polygon points="449.6,364.2 512.9,363.9 515.5,374.3 452.2,374.6" fill="#f0f0f0"></polygon><polygon points="554.0,315.4 556.6,325.8 515.5,374.3 512.9,363.9" fill="#3b3b3b"></polygon><polygon points="490.9,315.9 554.0,315.4 512.9,363.9 449.6,364.2" fill="#979797"></polygon></g><g id="gB"><polygon points="384.8,439.7 448.1,439.4 450.7,449.8 387.4,450.1" fill="#f0f0f0"></polygon><polygon points="489.2,390.9 491.8,401.3 450.7,449.8 448.1,439.4" fill="#3b3b3b"></polygon><polygon points="426.1,391.4 489.2,390.9 448.1,439.4 384.8,439.7" fill="#979797"></polygon></g></defs><g stroke="#000" stroke-width="1.5" stroke-linejoin="round"><use href="#gA"></use><use href="#gA" transform="translate(-61.5,138)"></use><use href="#gA" transform="translate(58.2,220.2)"></use><use href="#gB" transform="translate(58.2,220.2)"></use><use href="#gA" transform="translate(98,369)"></use><use href="#gB" transform="translate(98,369)"></use></g></svg>



</body></html>
